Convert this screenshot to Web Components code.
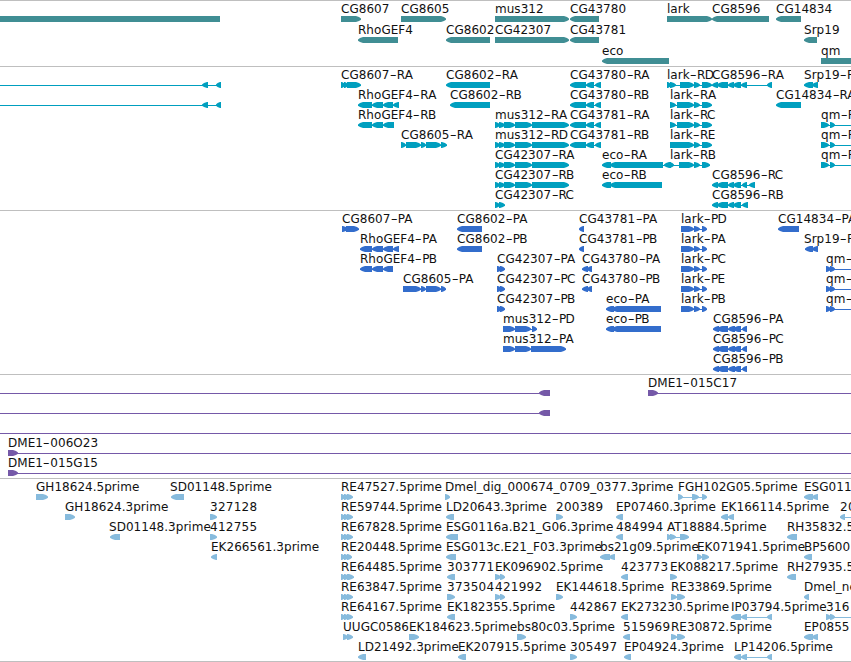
<!DOCTYPE html>
<html lang="en">
<head>
<meta charset="utf-8">
<title>Genome browser</title>
<style>
  body {
    margin: 0;
    background: #fff;
    overflow: hidden;
  }
</style>
<script>
class GenomeView extends HTMLElement {
  constructor() {
    super();
    this._shadowRoot = this.attachShadow({ mode: "open" });
    this._shadowRoot.innerHTML = `
      <style>
        :host {
          display: flex;
          flex-direction: column;
          width: 851px;
          height: 662px;
          box-sizing: border-box;
          overflow: hidden;
          font: 12px "DejaVu Sans", sans-serif;
          color: #111;
        }
        .end {
          height: 1px;
          background: #bfbfbf;
        }
      </style>
      <slot></slot>
      <div class="end"></div>
    `;
  }
}

class GenomeTrack extends HTMLElement {
  constructor() {
    super();
    this._shadowRoot = this.attachShadow({ mode: "open" });
    this._shadowRoot.innerHTML = `
      <style>
        :host {
          display: flex;
          flex-direction: column;
          flex: none;
          box-sizing: border-box;
          height: var(--height);
          border-top: 1px solid #bfbfbf;
          overflow: hidden;
        }
      </style>
      <slot></slot>
    `;
  }
}

class TrackRow extends HTMLElement {
  constructor() {
    super();
    this._shadowRoot = this.attachShadow({ mode: "open" });
    this._shadowRoot.innerHTML = `
      <style>
        :host {
          display: grid;
          grid-template-columns: 100%;
          flex: none;
          height: var(--pitch, 20px);
        }
        ::slotted(*) {
          grid-area: 1 / 1;
        }
      </style>
      <slot></slot>
    `;
  }
}

// spans: "start-end,start-end" in view pixels, line: "start-end" of the intron
class SeqFeature extends HTMLElement {
  constructor() {
    super();
    this._shadowRoot = this.attachShadow({ mode: "open" });
    this._shadowRoot.innerHTML = `
      <style>
        :host {
          display: flex;
          flex-direction: column;
          width: max-content;
        }
        .name {
          height: 15px;
          line-height: 17px;
          white-space: pre;
          letter-spacing: 0.03px;
        }
        .digits {
          letter-spacing: 0.25px;
        }
        .dash {
          display: inline-block;
          margin: 0 1.5px;
          line-height: 1;
          transform: scaleX(1.6);
        }
        .tight {
          letter-spacing: -0.7px;
        }
        svg {
          display: block;
          width: 1px;
          height: 6px;
          overflow: visible;
          fill: var(--ink);
        }
      </style>
      <div class="name"></div>
      <svg></svg>
    `;
  }

  connectedCallback() {
    const spans = this._ranges("spans");
    const line = this._ranges("line")[0];
    const first = line || spans[0];
    const at = this.hasAttribute("at") ? Number(this.getAttribute("at")) : first[0];
    const strand = this.getAttribute("strand");

    this.style.marginLeft = at + "px";
    this._renderName(this.getAttribute("name") || "");

    const from = first[0];
    const to = line ? line[1] : spans[spans.length - 1][1];
    let shapes = "";
    if (line || spans.length > 1) {
      shapes += `<rect x="${from - at}" y="3" width="${to - from}" height="1"/>`;
    }
    spans.forEach(([a, b]) => {
      shapes += `<polygon points="${this._block(a - at, b - at, strand)}"/>`;
    });
    this._shadowRoot.querySelector("svg").innerHTML = shapes;
  }

  _renderName(name) {
    const el = this._shadowRoot.querySelector(".name");
    const [base, suffix] = name.split("-");
    if (suffix === undefined) {
      el.textContent = name;
      el.classList.toggle("digits", /^\d+$/.test(name));
      return;
    }
    const tight = /^[RP][B-E]$/.test(suffix) ? "tight" : "";
    el.innerHTML = `${base}<span class="dash">-</span><span class="${tight}">${suffix}</span>`;
  }

  _ranges(name) {
    const value = this.getAttribute(name);
    return value ? value.split(",").map((r) => r.split("-").map(Number)) : [];
  }

  _block(a, b, strand) {
    const head = Math.min(5, b - a - 1);
    const mid = head * 0.4;
    if (strand === "+") {
      return `${a},0 ${b - head},0 ${b - mid},1.1 ${b},2.4 ${b},3.8 ${b - mid},4.9 ${b - head},6 ${a},6`;
    }
    if (strand === "-") {
      return `${b},0 ${a + head},0 ${a + mid},1.1 ${a},2.4 ${a},3.8 ${a + mid},4.9 ${a + head},6 ${b},6`;
    }
    return `${a},0 ${b},0 ${b},6 ${a},6`;
  }
}

window.customElements.define("genome-view", GenomeView);
window.customElements.define("genome-track", GenomeTrack);
window.customElements.define("track-row", TrackRow);
window.customElements.define("seq-feature", SeqFeature);
</script>
</head>
<body>
<genome-view>
  <!-- genes -->
  <genome-track style="--ink: #408e94; --height: 66px; --pitch: 21px">
    <track-row>
      <seq-feature spans="0-220"></seq-feature>
      <seq-feature name="CG8607" strand="+" spans="341-361"></seq-feature>
      <seq-feature name="CG8605" strand="+" spans="401-446"></seq-feature>
      <seq-feature name="mus312" strand="+" spans="495-569"></seq-feature>
      <seq-feature name="CG43780" strand="-" spans="570-599"></seq-feature>
      <seq-feature name="lark" strand="+" spans="667-712"></seq-feature>
      <seq-feature name="CG8596" strand="-" spans="712-769"></seq-feature>
      <seq-feature name="CG14834" strand="-" spans="776-801"></seq-feature>
    </track-row>
    <track-row>
      <seq-feature name="RhoGEF4" strand="-" spans="358-398"></seq-feature>
      <seq-feature name="CG8602" strand="-" spans="446-490"></seq-feature>
      <seq-feature name="CG42307" strand="+" spans="495-569"></seq-feature>
      <seq-feature name="CG43781" strand="-" spans="570-599"></seq-feature>
      <seq-feature name="Srp19" strand="-" spans="804-817"></seq-feature>
    </track-row>
    <track-row>
      <seq-feature name="eco" strand="-" spans="602-669"></seq-feature>
      <seq-feature name="qm" strand="+" spans="821-880"></seq-feature>
    </track-row>
  </genome-track>

  <!-- transcripts -->
  <genome-track style="--ink: #009fbf; --height: 144px">
    <track-row>
      <seq-feature strand="-" line="0-221" spans="202-208,216-221"></seq-feature>
      <seq-feature name="CG8607-RA" strand="+" spans="341-345,344-348,347-361"></seq-feature>
      <seq-feature name="CG8602-RA" strand="-" spans="446-490"></seq-feature>
      <seq-feature name="CG43780-RA" strand="-" spans="570-586,586-594,595-601"></seq-feature>
      <seq-feature name="lark-RD" strand="+" spans="667-671,670-676,680-694,694-700,702-712"></seq-feature>
      <seq-feature name="CG8596-RA" strand="-" spans="712-718,717-728,728-734,733-741,741-747,767-772"></seq-feature>
      <seq-feature name="Srp19-R" strand="-" spans="804-813,812-818"></seq-feature>
    </track-row>
    <track-row>
      <seq-feature strand="-" line="0-221" spans="202-208,216-221"></seq-feature>
      <seq-feature name="RhoGEF4-RA" strand="-" spans="358-372,372-383,383-393,393-399"></seq-feature>
      <seq-feature name="CG8602-RB" strand="-" spans="450-490"></seq-feature>
      <seq-feature name="CG43780-RB" strand="-" spans="570-586,586-594,595-601"></seq-feature>
      <seq-feature name="lark-RA" strand="+" spans="670-676,677-694,694-700,702-712"></seq-feature>
      <seq-feature name="CG14834-RA" strand="-" spans="776-801"></seq-feature>
    </track-row>
    <track-row>
      <seq-feature name="RhoGEF4-RB" strand="-" spans="358-372,372-383,383-394"></seq-feature>
      <seq-feature name="mus312-RA" strand="+" spans="495-500,499-505,504-515,515-532,532-569"></seq-feature>
      <seq-feature name="CG43781-RA" strand="-" spans="570-586,586-594,595-601"></seq-feature>
      <seq-feature name="lark-RC" strand="+" spans="670-676,677-694,694-700,702-712"></seq-feature>
      <seq-feature name="qm-R" strand="+" line="821-851" spans="821-829,830-835"></seq-feature>
    </track-row>
    <track-row>
      <seq-feature name="CG8605-RA" strand="+" spans="401-406,406-421,421-426,426-441,441-447"></seq-feature>
      <seq-feature name="mus312-RD" strand="+" spans="495-500,499-505,504-515,515-532,532-569"></seq-feature>
      <seq-feature name="CG43781-RB" strand="-" spans="570-586,586-594,595-601"></seq-feature>
      <seq-feature name="lark-RE" strand="+" spans="670-694,694-700,702-712"></seq-feature>
      <seq-feature name="qm-R" strand="+" line="821-851" spans="821-829,830-835"></seq-feature>
    </track-row>
    <track-row>
      <seq-feature name="CG42307-RA" strand="+" spans="495-500,499-505,504-515,515-532,532-569"></seq-feature>
      <seq-feature name="eco-RA" strand="-" spans="602-611,610-663,664-671"></seq-feature>
      <seq-feature name="lark-RB" strand="+" at="670" line="669-710" spans="669-674,679-694,694-700,702-710"></seq-feature>
      <seq-feature name="qm-R" strand="+" line="821-851" spans="821-829,830-835"></seq-feature>
    </track-row>
    <track-row>
      <seq-feature name="CG42307-RB" strand="+" spans="495-500,499-505,504-515,515-532,532-569"></seq-feature>
      <seq-feature name="eco-RB" strand="-" spans="602-611,610-662"></seq-feature>
      <seq-feature name="CG8596-RC" strand="-" spans="712-718,717-728,728-734,733-741,742-747,749-755"></seq-feature>
    </track-row>
    <track-row>
      <seq-feature name="CG42307-RC" strand="+" spans="495-500,499-505"></seq-feature>
      <seq-feature name="CG8596-RB" strand="-" spans="712-718,717-728,728-734,733-741,742-748"></seq-feature>
    </track-row>
  </genome-track>

  <!-- proteins -->
  <genome-track style="--ink: #336dcc; --height: 164px">
    <track-row>
      <seq-feature name="CG8607-PA" strand="+" spans="342-348,346-359"></seq-feature>
      <seq-feature name="CG8602-PA" strand="-" spans="457-482"></seq-feature>
      <seq-feature name="CG43781-PA" strand="-" spans="579-584"></seq-feature>
      <seq-feature name="lark-PD" strand="+" spans="681-694,694-700,702-707"></seq-feature>
      <seq-feature name="CG14834-PA" strand="-" spans="778-799"></seq-feature>
    </track-row>
    <track-row>
      <seq-feature name="RhoGEF4-PA" strand="-" spans="360-372,372-383,383-393,393-399"></seq-feature>
      <seq-feature name="CG8602-PB" strand="-" spans="457-482"></seq-feature>
      <seq-feature name="CG43781-PB" strand="-" spans="579-584"></seq-feature>
      <seq-feature name="lark-PA" strand="+" spans="681-694,694-700,702-707"></seq-feature>
      <seq-feature name="Srp19-P" at="804" strand="-" spans="805-813,812-818"></seq-feature>
    </track-row>
    <track-row>
      <seq-feature name="RhoGEF4-PB" strand="-" spans="360-372,372-383,383-393"></seq-feature>
      <seq-feature name="CG42307-PA" strand="+" spans="497-502,500-505"></seq-feature>
      <seq-feature name="CG43780-PA" strand="-" spans="582-588,587-592"></seq-feature>
      <seq-feature name="lark-PC" strand="+" spans="681-694,694-700,702-707"></seq-feature>
      <seq-feature name="qm-" strand="+" line="826-851" spans="826-831,830-835"></seq-feature>
    </track-row>
    <track-row>
      <seq-feature name="CG8605-PA" strand="+" spans="403-421,421-426,426-441,441-446"></seq-feature>
      <seq-feature name="CG42307-PC" strand="+" spans="497-502,500-505"></seq-feature>
      <seq-feature name="CG43780-PB" strand="-" spans="582-588,587-592"></seq-feature>
      <seq-feature name="lark-PE" strand="+" spans="681-694,694-700,702-707"></seq-feature>
      <seq-feature name="qm-" strand="+" line="826-851" spans="826-831,830-835"></seq-feature>
    </track-row>
    <track-row>
      <seq-feature name="CG42307-PB" strand="+" spans="497-502,500-505"></seq-feature>
      <seq-feature name="eco-PA" strand="-" spans="606-614,612-661"></seq-feature>
      <seq-feature name="lark-PB" strand="+" spans="681-694,694-700,702-707"></seq-feature>
      <seq-feature name="qm-" strand="+" line="826-851" spans="826-831,830-835"></seq-feature>
    </track-row>
    <track-row>
      <seq-feature name="mus312-PD" strand="+" spans="503-515,515-531,532-537"></seq-feature>
      <seq-feature name="eco-PB" strand="-" spans="606-614,612-661"></seq-feature>
      <seq-feature name="CG8596-PA" strand="-" spans="713-719,717-728,728-735,733-741,742-747"></seq-feature>
    </track-row>
    <track-row>
      <seq-feature name="mus312-PA" strand="+" spans="503-515,515-531,531-566"></seq-feature>
      <seq-feature name="CG8596-PC" strand="-" spans="713-719,717-728,728-735,733-741,742-747"></seq-feature>
    </track-row>
    <track-row>
      <seq-feature name="CG8596-PB" strand="-" spans="713-719,717-728,728-735,733-741,742-747"></seq-feature>
    </track-row>
  </genome-track>

  <!-- BAC clones -->
  <genome-track style="--ink: #7559a8; --height: 104px">
    <track-row>
      <seq-feature strand="-" line="0-550" spans="539-550"></seq-feature>
      <seq-feature name="DME1-015C17" strand="+" line="648-851" spans="648-658"></seq-feature>
    </track-row>
    <track-row>
      <seq-feature strand="-" line="0-550" spans="539-550"></seq-feature>
    </track-row>
    <track-row>
      <seq-feature line="0-851"></seq-feature>
    </track-row>
    <track-row>
      <seq-feature name="DME1-006O23" strand="+" line="8-851" spans="8-18"></seq-feature>
    </track-row>
    <track-row>
      <seq-feature name="DME1-015G15" strand="+" line="8-851" spans="8-18"></seq-feature>
    </track-row>
  </genome-track>

  <!-- ESTs and insertions -->
  <genome-track style="--ink: #87bbdd; --height: 183px">
    <track-row>
      <seq-feature name="GH18624.5prime" strand="+" spans="36-48"></seq-feature>
      <seq-feature name="SD01148.5prime" at="170" strand="-" spans="171-184"></seq-feature>
      <seq-feature name="RE47527.5prime" strand="+" spans="341-345,344-349,347-353"></seq-feature>
      <seq-feature name="Dmel_dig_000674_0709_0377.3prime" strand="+" spans="445-450"></seq-feature>
      <seq-feature name="FGH102G05.5prime" strand="+" spans="678-683,692-699,702-707"></seq-feature>
      <seq-feature name="ESG011" strand="-" spans="804-813,812-818"></seq-feature>
    </track-row>
    <track-row>
      <seq-feature name="GH18624.3prime" strand="+" spans="65-75"></seq-feature>
      <seq-feature name="327128" strand="+" spans="210-217"></seq-feature>
      <seq-feature name="RE59744.5prime" strand="+" spans="341-345,344-349,347-353"></seq-feature>
      <seq-feature name="LD20643.3prime" strand="-" spans="446-454"></seq-feature>
      <seq-feature name="200389" strand="+" spans="556-563"></seq-feature>
      <seq-feature name="EP07460.3prime" strand="-" spans="616-623"></seq-feature>
      <seq-feature name="EK166114.5prime" strand="-" spans="721-728,728-734"></seq-feature>
      <seq-feature name="20" strand="-" line="840-851" spans="840-845"></seq-feature>
    </track-row>
    <track-row>
      <seq-feature name="SD01148.3prime" at="109" strand="-" spans="110-120"></seq-feature>
      <seq-feature name="412755" strand="+" spans="210-217"></seq-feature>
      <seq-feature name="RE67828.5prime" strand="+" spans="341-345,344-349,347-353"></seq-feature>
      <seq-feature name="ESG0116a.B21_G06.3prime" strand="-" spans="446-458"></seq-feature>
      <seq-feature name="484994" strand="-" spans="616-623"></seq-feature>
      <seq-feature name="AT18884.5prime" strand="+" spans="667-671,670-676,680-689"></seq-feature>
      <seq-feature name="RH35832.5" strand="-" spans="787-797"></seq-feature>
    </track-row>
    <track-row>
      <seq-feature name="EK266561.3prime" strand="-" spans="211-217"></seq-feature>
      <seq-feature name="RE20448.5prime" strand="+" spans="341-345,344-349,347-352"></seq-feature>
      <seq-feature name="ESG013c.E21_F03.3prime" strand="-" spans="446-456"></seq-feature>
      <seq-feature name="bs21g09.5prime" strand="-" spans="600-610,609-615"></seq-feature>
      <seq-feature name="EK071941.5prime" strand="+" spans="697-702,702-709"></seq-feature>
      <seq-feature name="BP5600" strand="-" spans="804-812"></seq-feature>
    </track-row>
    <track-row>
      <seq-feature name="RE64485.5prime" strand="+" spans="341-345,344-349,347-354"></seq-feature>
      <seq-feature name="303771" strand="-" spans="447-455"></seq-feature>
      <seq-feature name="EK096902.5prime" strand="+" spans="495-501,500-505"></seq-feature>
      <seq-feature name="423773" strand="-" spans="621-628"></seq-feature>
      <seq-feature name="EK088217.5prime" strand="+" spans="670-677"></seq-feature>
      <seq-feature name="RH27935.5" strand="-" spans="787-796"></seq-feature>
    </track-row>
    <track-row>
      <seq-feature name="RE63847.5prime" strand="+" spans="341-345,344-349,347-353"></seq-feature>
      <seq-feature name="373504" strand="+" spans="447-455"></seq-feature>
      <seq-feature name="421992" strand="+" spans="495-501,500-505"></seq-feature>
      <seq-feature name="EK144618.5prime" strand="+" spans="556-563"></seq-feature>
      <seq-feature name="RE33869.5prime" strand="+" spans="671-677,677-685"></seq-feature>
      <seq-feature name="Dmel_ne" strand="-" spans="804-809"></seq-feature>
    </track-row>
    <track-row>
      <seq-feature name="RE64167.5prime" strand="+" spans="341-345,344-349,347-353"></seq-feature>
      <seq-feature name="EK182355.5prime" strand="-" spans="447-455"></seq-feature>
      <seq-feature name="442867" strand="+" spans="570-577"></seq-feature>
      <seq-feature name="EK273230.5prime" strand="-" spans="621-628"></seq-feature>
      <seq-feature name="IP03794.5prime" strand="-" spans="731-741,741-747,767-772"></seq-feature>
      <seq-feature name="316" strand="+" line="826-851" spans="826-831,830-835"></seq-feature>
    </track-row>
    <track-row>
      <seq-feature name="UUGC0586" strand="+" spans="343-348,347-353"></seq-feature>
      <seq-feature name="EK184623.5prime" strand="+" spans="409-419"></seq-feature>
      <seq-feature name="bs80c03.5prime" strand="+" spans="517-526"></seq-feature>
      <seq-feature name="515969" strand="-" spans="623-630"></seq-feature>
      <seq-feature name="RE30872.5prime" strand="+" spans="671-677,677-685"></seq-feature>
      <seq-feature name="EP0855" strand="-" spans="804-813,812-818"></seq-feature>
    </track-row>
    <track-row>
      <seq-feature name="LD21492.3prime" strand="-" spans="358-366"></seq-feature>
      <seq-feature name="EK207915.5prime" strand="-" spans="458-466"></seq-feature>
      <seq-feature name="305497" strand="+" spans="570-577"></seq-feature>
      <seq-feature name="EP04924.3prime" strand="-" spans="624-631"></seq-feature>
      <seq-feature name="LP14206.5prime" strand="-" spans="734-741,741-747,767-772"></seq-feature>
    </track-row>
  </genome-track>
</genome-view>
</body>
</html>
